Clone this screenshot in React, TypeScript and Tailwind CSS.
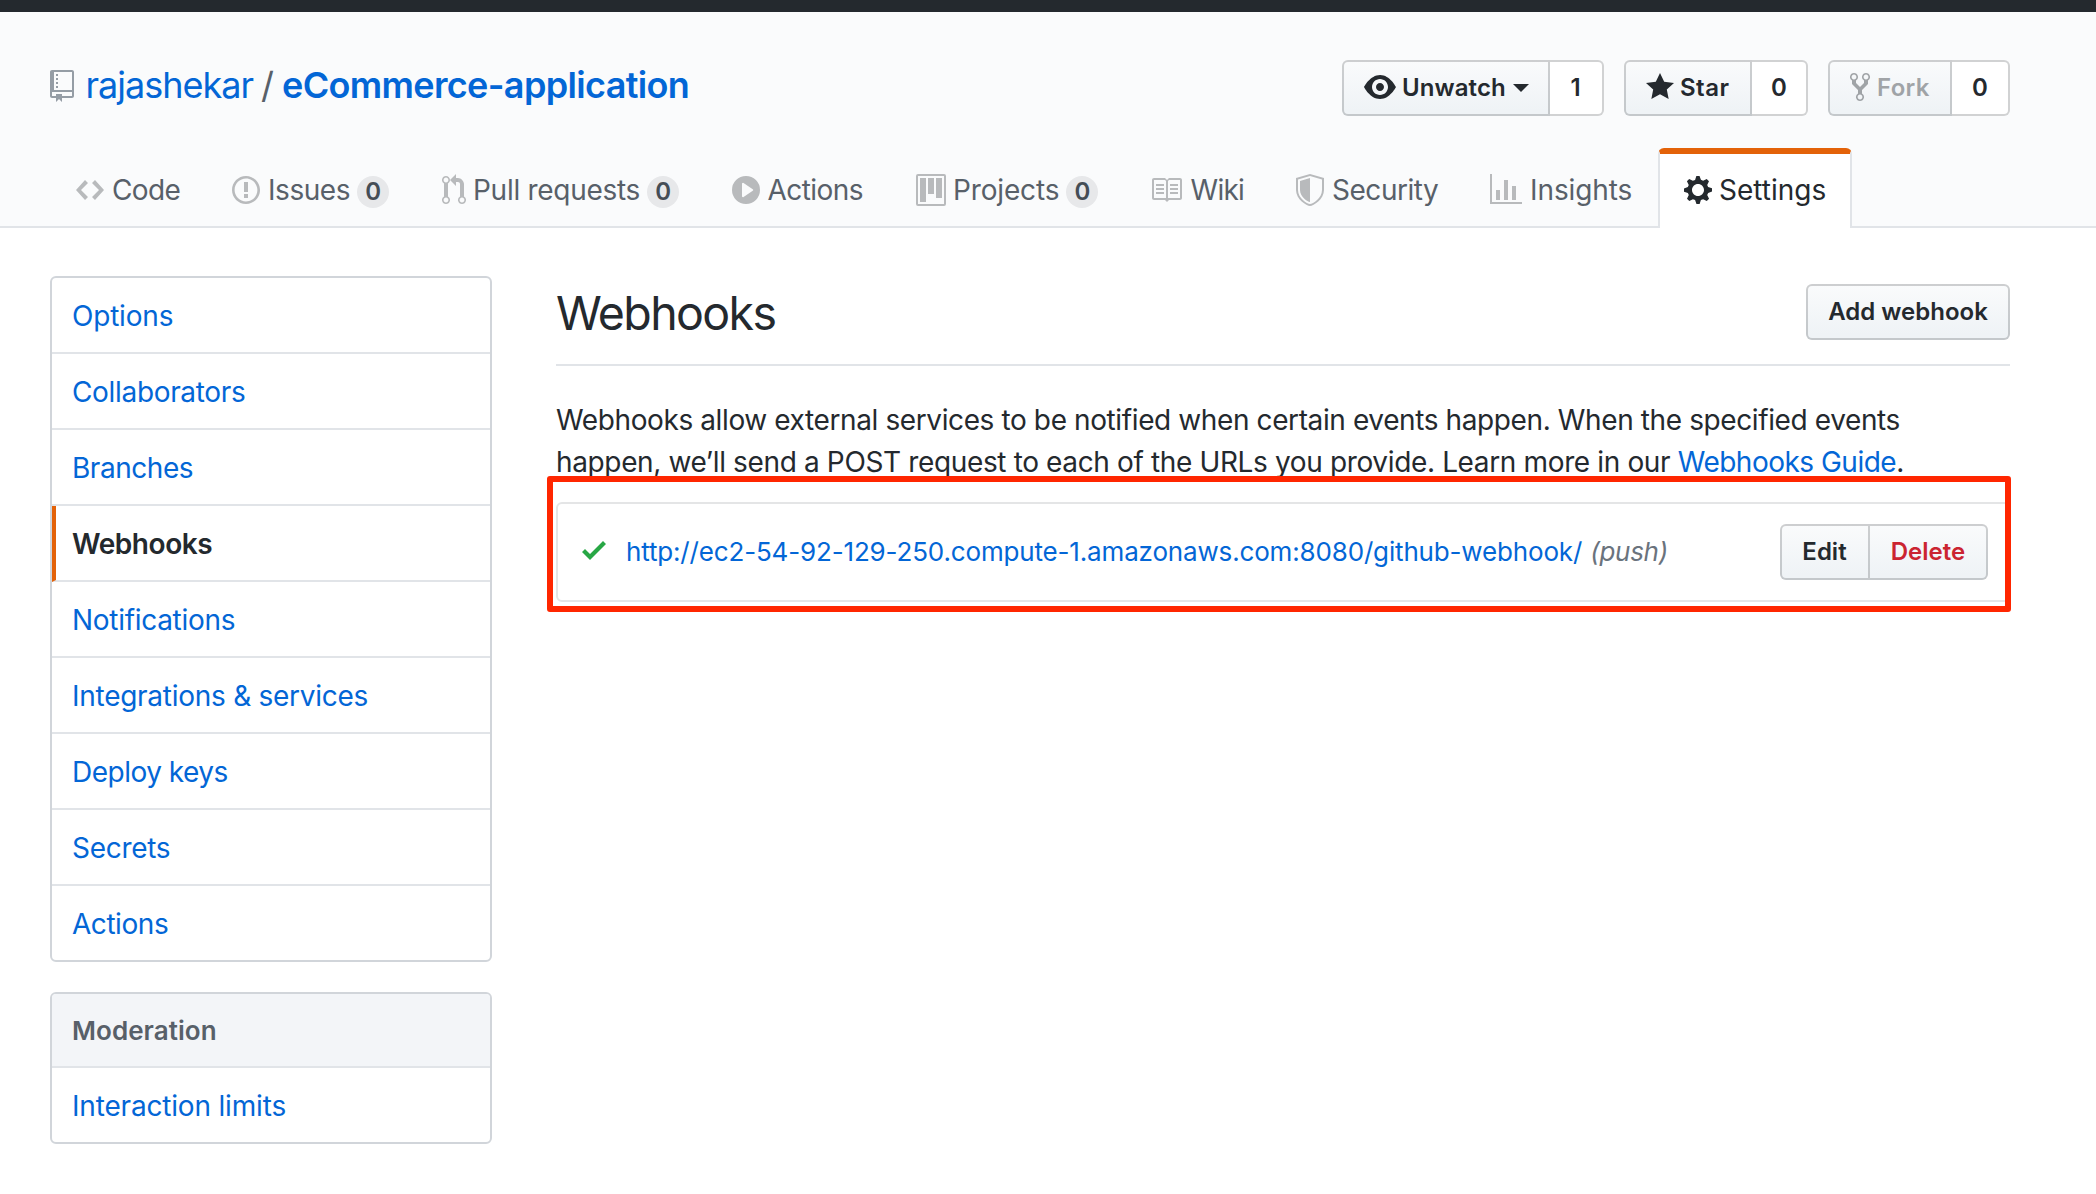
import type { ReactNode } from "react";

type IconDef = { w: number; d: string };

const ICONS = {
  repo: { w: 12, d: "M4 9H3V8h1v1zm0-3H3v1h1V6zm0-2H3v1h1V4zm0-2H3v1h1V2zm8-1v12c0 .55-.45 1-1 1H6v2l-1.5-1.5L3 16v-2H1c-.55 0-1-.45-1-1V1c0-.55.45-1 1-1h10c.55 0 1 .45 1 1zm-1 10H1v2h2v-1h3v1h5v-2zm0-10H2v9h9V1z" },
  code: { w: 14, d: "M9.5 3L8 4.5 11.5 8 8 11.5 9.5 13 14 8 9.5 3zm-5 0L0 8l4.5 5L6 11.5 2.5 8 6 4.5 4.5 3z" },
  issue: { w: 14, d: "M7 2.3c3.14 0 5.7 2.56 5.7 5.7s-2.56 5.7-5.7 5.7A5.71 5.71 0 0 1 1.3 8c0-3.14 2.56-5.7 5.7-5.7zM7 1C3.14 1 0 4.14 0 8s3.14 7 7 7 7-3.14 7-7-3.14-7-7-7zm1 3H6v5h2V4zm0 6H6v2h2v-2z" },
  pull: { w: 12, d: "M11 11.28V5c-.03-.78-.34-1.47-.94-2.06C9.46 2.35 8.78 2.03 8 2H7V0L4 3l3 3V4h1c.27.02.48.11.69.31.21.2.3.42.31.69v6.28A1.993 1.993 0 0 0 10 15a1.993 1.993 0 0 0 1-3.72zm-1 2.92c-.66 0-1.2-.55-1.2-1.2 0-.65.55-1.2 1.2-1.2.65 0 1.2.55 1.2 1.2 0 .65-.55 1.2-1.2 1.2zM4 3c0-1.11-.89-2-2-2a1.993 1.993 0 0 0-1 3.72v6.56A1.993 1.993 0 0 0 2 15a1.993 1.993 0 0 0 1-3.72V4.72c.59-.34 1-.98 1-1.72zm-.8 10c0 .66-.55 1.2-1.2 1.2-.65 0-1.2-.55-1.2-1.2 0-.65.55-1.2 1.2-1.2.65 0 1.2.55 1.2 1.2zM2 4.2C1.34 4.2.8 3.65.8 3c0-.65.55-1.2 1.2-1.2.65 0 1.2.55 1.2 1.2 0 .65-.55 1.2-1.2 1.2z" },
  play: { w: 14, d: "M14 8A7 7 0 1 1 0 8a7 7 0 0 1 14 0zm-8.223 3.482l4.599-3.066a.5.5 0 0 0 0-.832L5.777 4.518A.5.5 0 0 0 5 4.934v6.132a.5.5 0 0 0 .777.416z" },
  project: { w: 15, d: "M10 12h3V2h-3v10zm-4-2h3V2H6v8zm-4 4h3V2H2v12zm-1 1h13V1H1v14zM14 0H1a1 1 0 0 0-1 1v14a1 1 0 0 0 1 1h13a1 1 0 0 0 1-1V1a1 1 0 0 0-1-1z" },
  book: { w: 16, d: "M3 5h4v1H3V5zm0 3h4V7H3v1zm0 2h4V9H3v1zm11-5h-4v1h4V5zm0 2h-4v1h4V7zm0 2h-4v1h4V9zm2-6v9c0 .55-.45 1-1 1H9.5l-1 1-1-1H2c-.55 0-1-.45-1-1V3c0-.55.45-1 1-1h5.5l1 1 1-1H15c.55 0 1 .45 1 1zm-8 .5L7.5 3H2v9h6V3.5zm7-.5H9.5l-.5.5V12h6V3z" },
  shield: { w: 14, d: "M0 2l7-2 7 2v6.02C14 12.69 8.69 16 7 16c-1.69 0-7-3.31-7-7.98V2zm1 .75L7 1l6 1.75v5.268C13 12.104 8.449 15 7 15c-1.449 0-6-2.896-6-6.982V2.75zm1 .75L7 2v12c-1.207 0-5-2.482-5-5.985V3.5z" },
  graph: { w: 16, d: "M16 14v1H0V0h1v14h15zM5 13H3V8h2v5zm4 0H7V3h2v10zm4 0h-2V6h2v7z" },
  gear: { w: 14, d: "M14 8.77v-1.6l-1.94-.64-.45-1.09.88-1.84-1.13-1.13-1.81.91-1.09-.45-.69-1.92h-1.6l-.63 1.94-1.11.45-1.84-.88-1.13 1.13.91 1.81-.45 1.09L0 7.23v1.59l1.94.64.45 1.09-.88 1.84 1.13 1.13 1.81-.91 1.09.45.69 1.92h1.59l.63-1.94 1.11-.45 1.84.88 1.13-1.13-.92-1.81.47-1.09L14 8.75v.02zM7 11c-1.66 0-3-1.34-3-3s1.34-3 3-3 3 1.34 3 3-1.34 3-3 3z" },
  eye: { w: 16, d: "M8.06 2C3 2 0 8 0 8s3 6 8.06 6C13 14 16 8 16 8s-3-6-7.94-6zM8 12c-2.2 0-4-1.78-4-4 0-2.2 1.8-4 4-4 2.22 0 4 1.8 4 4 0 2.22-1.78 4-4 4zm2-4c0 1.11-.89 2-2 2-1.11 0-2-.89-2-2 0-1.11.89-2 2-2 1.11 0 2 .89 2 2z" },
  star: { w: 14, d: "M14 6l-4.9-.64L7 1 4.9 5.36 0 6l3.6 3.26L2.67 14 7 11.67 11.33 14l-.93-4.74L14 6z" },
  fork: { w: 10, d: "M8 1a1.993 1.993 0 0 0-1 3.72V6L5 8 3 6V4.72A1.993 1.993 0 0 0 2 1a1.993 1.993 0 0 0-1 3.72V6.5l3 3v1.78A1.993 1.993 0 0 0 5 15a1.993 1.993 0 0 0 1-3.72V9.5l3-3V4.72A1.993 1.993 0 0 0 8 1zM2 4.2C1.34 4.2.8 3.65.8 3c0-.65.55-1.2 1.2-1.2.65 0 1.2.55 1.2 1.2 0 .65-.55 1.2-1.2 1.2zm3 10c-.66 0-1.2-.55-1.2-1.2 0-.65.55-1.2 1.2-1.2.65 0 1.2.55 1.2 1.2 0 .65-.55 1.2-1.2 1.2zm3-10c-.66 0-1.2-.55-1.2-1.2 0-.65.55-1.2 1.2-1.2.65 0 1.2.55 1.2 1.2 0 .65-.55 1.2-1.2 1.2z" },
  check: { w: 12, d: "M12 5l-8 8-4-4 1.5-1.5L4 10l6.5-6.5L12 5z" },
} satisfies Record<string, IconDef>;

function Icon({ name, className = "" }: { name: keyof typeof ICONS; className?: string }) {
  const { w, d } = ICONS[name];
  return (
    <svg width={w * 2} height={32} viewBox={`0 0 ${w} 16`} className={`shrink-0 ${className}`} fill="currentColor" fillRule="evenodd" aria-hidden="true">
      <path d={d} />
    </svg>
  );
}

const BTN =
  "flex h-14 items-center border-2 border-[#1b1f23]/20 bg-linear-to-b from-[#fafbfc] to-[#eff3f6] to-90% bg-origin-border text-[24px] font-semibold";

function SocialButton({ button, count, buttonClass, countClass }: { button: ReactNode; count: string; buttonClass: string; countClass: string }) {
  return (
    <li className="flex">
      <button className={`${BTN} rounded-l-[6px] pb-px ${buttonClass}`}>{button}</button>
      <a className={`flex h-14 items-center justify-center rounded-r-[6px] border-2 border-l-0 border-[#1b1f23]/20 bg-white text-[24px] font-semibold ${countClass}`}>
        {count}
      </a>
    </li>
  );
}

type Tab = { icon: keyof typeof ICONS; label: string; width: string; text: string; count?: string };

const TABS: Tab[] = [
  { icon: "code", label: "Code", width: "w-[156px]", text: "ml-[8px] tracking-[-0.63px]" },
  { icon: "issue", label: "Issues", width: "w-[210px]", text: "ml-[8px] tracking-[-0.45px]", count: "0" },
  { icon: "pull", label: "Pull requests", width: "w-[290px]", text: "ml-[7px] tracking-[-0.28px]", count: "0" },
  { icon: "play", label: "Actions", width: "w-[184px]", text: "ml-[7.5px] tracking-[-0.55px]" },
  { icon: "project", label: "Projects", width: "w-[234px]", text: "ml-[7px] tracking-[-0.15px]", count: "0" },
  { icon: "book", label: "Wiki", width: "w-[146px]", text: "ml-[8.5px] tracking-[-0.71px]" },
  { icon: "shield", label: "Security", width: "w-[194px]", text: "ml-[8px] tracking-[-0.47px]" },
  { icon: "graph", label: "Insights", width: "w-[168px]", text: "ml-[8px] tracking-[-0.09px]" },
];

const MENU = [
  { label: "Options", tracking: "tracking-[-0.2px]" },
  { label: "Collaborators", tracking: "tracking-[-0.33px]" },
  { label: "Branches", tracking: "tracking-[-0.45px]" },
  { label: "Webhooks", tracking: "tracking-[-0.45px]", active: true },
  { label: "Notifications", tracking: "tracking-[-0.3px]" },
  { label: "Integrations & services", tracking: "tracking-[-0.27px]" },
  { label: "Deploy keys", tracking: "tracking-[-0.5px]" },
  { label: "Secrets", tracking: "tracking-[-0.3px]" },
  { label: "Actions", tracking: "tracking-[-0.45px]" },
];

function RepoHeader() {
  return (
    <header className="flex h-[216px] flex-col justify-between border-b-2 border-[#e1e4e8] bg-[#fafbfc]">
      <div className="flex justify-between pl-[50px] pr-[86px] pt-[48px]">
        <h1 className="flex h-[50px] items-center text-[36px] leading-[50px] text-[#586069]">
          <Icon name="repo" className="mt-0.5 text-[#959da5]" />
          <a className="ml-[11.5px] tracking-[-1px] text-[#0366d6]">rajashekar</a>
          <span className="mx-[8px]">/</span>
          <a className="font-semibold tracking-[-0.65px] text-[#0366d6]">eCommerce-application</a>
        </h1>
        <ul className="flex">
          <SocialButton
            count="1"
            buttonClass="w-[208px] pl-5"
            countClass="mr-[20px] w-[54px] pr-px"
            button={
              <>
                <Icon name="eye" className="mb-px" />
                <span className="ml-[6px] tracking-[0.1px]">Unwatch</span>
                <span className="ml-[7px] border-x-8 border-t-8 border-x-transparent border-t-current" />
              </>
            }
          />
          <SocialButton
            count="0"
            buttonClass="w-[128px] pl-5"
            countClass="mr-[20px] w-[56px]"
            button={
              <>
                <Icon name="star" className="mb-px" />
                <span className="ml-[6px] tracking-[0.5px]">Star</span>
              </>
            }
          />
          <SocialButton
            count="0"
            buttonClass="w-[124px] pl-5"
            countClass="w-[58px]"
            button={
              <>
                <Icon name="fork" className="mb-px opacity-40" />
                <span className="ml-[7px] tracking-[0.3px] opacity-40">Fork</span>
              </>
            }
          />
        </ul>
      </div>
      <nav className="-mb-0.5 flex h-20 pl-[76px] text-[28px] text-[#586069]">
        {TABS.map((tab) => (
          <a key={tab.label} className={`flex items-center pt-1 ${tab.width}`}>
            <Icon name={tab.icon} className="text-[#b8babc]" />
            <span className={tab.text}>{tab.label}</span>
            {tab.count && (
              <span className="ml-[7px] mt-1 flex size-8 items-center justify-center rounded-full bg-[#e7e8ea] text-[24px] font-semibold text-[#444d56]">
                {tab.count}
              </span>
            )}
          </a>
        ))}
        <a className="flex w-[194px] items-center rounded-t-[6px] border-x-2 border-t-[6px] border-x-[#e1e4e8] border-t-[#e36209] bg-white pb-[2px] pl-6 text-[#24292e]">
          <Icon name="gear" />
          <span className="ml-[7px]">Settings</span>
        </a>
      </nav>
    </header>
  );
}

function Sidebar() {
  return (
    <aside className="w-[442px] shrink-0 text-[28px] leading-[42px]">
      <nav className="overflow-hidden rounded-[6px] border-2 border-[#d1d5da]">
        {MENU.map((item) => (
          <a
            key={item.label}
            className={`flex h-[76px] items-center border-b-2 border-[#e1e4e8] last:h-[74px] last:border-b-0 ${item.tracking} ${
              item.active ? "border-l-4 border-l-[#e36209] pl-4 font-semibold text-[#24292e]" : "pl-5 text-[#0366d6]"
            }`}
          >
            <span className="pt-[2px]">{item.label}</span>
          </a>
        ))}
      </nav>
      <nav className="mt-[30px] overflow-hidden rounded-[6px] border-2 border-[#d1d5da]">
        <h3 className="flex h-[74px] items-center border-b-2 border-[#e1e4e8] bg-[#f3f5f8] pl-5 pt-[2px] text-[26px] font-semibold tracking-[0.05px] text-[#586069]">
          Moderation
        </h3>
        <a className="flex h-[74px] items-center pl-5 pt-[2px] tracking-[-0.18px] text-[#0366d6]">Interaction limits</a>
      </nav>
    </aside>
  );
}

function Webhooks() {
  return (
    <main className="w-[1454px]">
      <div className="flex h-[90px] items-start justify-between border-b-2 border-[#e1e4e8]">
        <h2 className="pt-[1px] text-[46.5px] leading-[72px] tracking-[-1.62px]">Webhooks</h2>
        <button className={`${BTN} mt-2 w-[204px] justify-center rounded-[6px] pb-px`}>Add webhook</button>
      </div>
      <p className="mt-[33px] text-[28px] leading-[42px] whitespace-nowrap">
        <span className="tracking-[-0.39px]">
          Webhooks allow external services to be notified when certain events happen. When the specified events
        </span>
        <br />
        <span className="tracking-[-0.36px]">happen, we’ll send a POST request to each of the URLs you provide. Learn more in our </span>
        <a className="tracking-[-0.51px] text-[#0366d6]">Webhooks Guide</a>.
      </p>
      <div className="relative mt-[19px] flex h-[100px] items-center rounded-[6px] border-2 border-[#e4e5e6] pl-6 pr-5">
        <Icon name="check" className="mb-1 text-[#28a745]" />
        <a className="mb-[2px] ml-[20px] text-[26px] tracking-[-0.16px] text-[#0366d6]">
          http://ec2-54-92-129-250.compute-1.amazonaws.com:8080/github-webhook/
        </a>
        <em className="mb-[2px] ml-[8px] text-[26px] tracking-[-0.28px] text-[#6a737d]">(push)</em>
        <div className="ml-auto flex">
          <button className={`${BTN} w-[90px] justify-center rounded-l-[6px] pb-px pr-px`}>Edit</button>
          <button className={`${BTN} w-[118px] justify-center rounded-r-[6px] border-l-0 pb-px text-[#cb2431]`}>Delete</button>
        </div>
        <div className="pointer-events-none absolute -left-[11px] -right-[3px] -top-[28px] -bottom-[12px] rounded-[3px] border-[6px] border-[#ff2600]" />
      </div>
    </main>
  );
}

export default function App() {
  return (
    <div className="h-[1194px] overflow-hidden bg-white font-['Inter',sans-serif] text-[#24292e]">
      <div className="h-3 bg-[#24292e]" />
      <RepoHeader />
      <div className="flex gap-16 pl-[50px] pt-12">
        <Sidebar />
        <Webhooks />
      </div>
    </div>
  );
}
